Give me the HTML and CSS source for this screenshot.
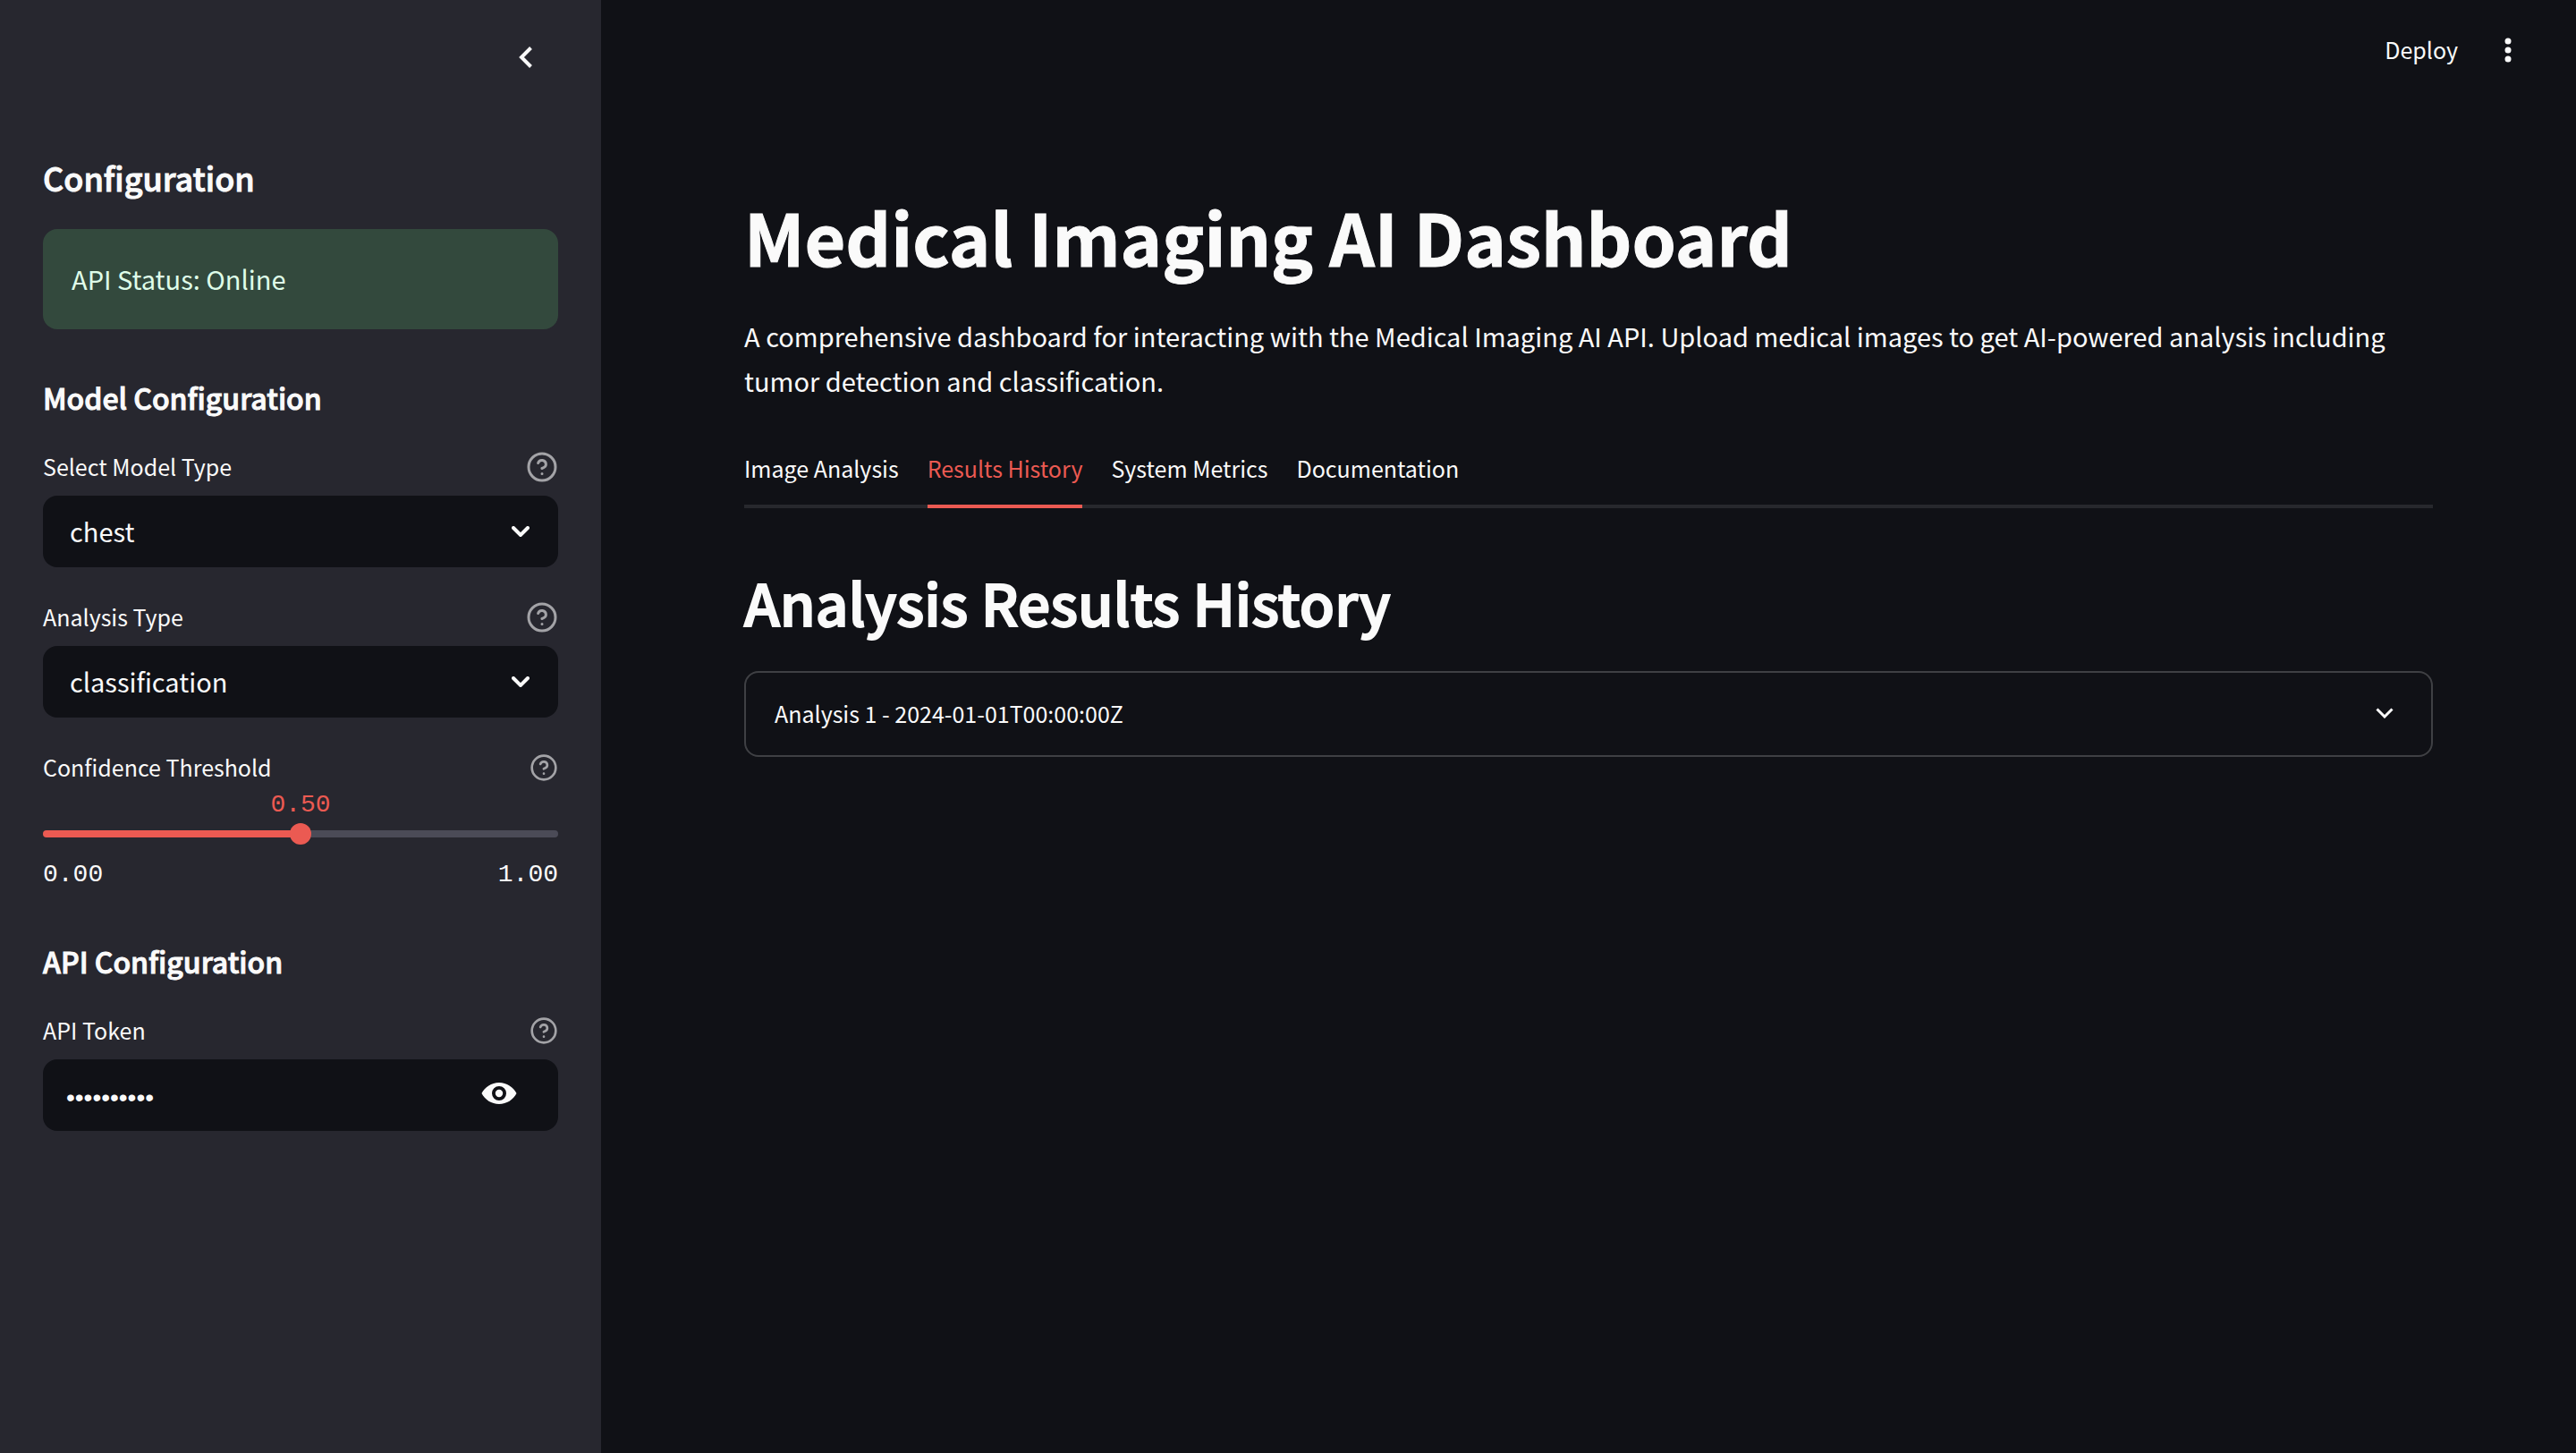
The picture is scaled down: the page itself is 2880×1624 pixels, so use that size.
FILE: index.html
```html
<!DOCTYPE html>
<html lang="en">
<head>
<meta charset="utf-8">
<meta name="viewport" content="width=device-width, initial-scale=1">
<title>Medical Imaging AI Dashboard</title>
<link rel="stylesheet" href="styles.css">
</head>
<body>
<svg class="sprite" aria-hidden="true">
  <symbol id="icon-help" viewBox="0 0 24 24"><g fill="none" stroke="currentColor" stroke-width="2" stroke-linecap="round" stroke-linejoin="round"><circle cx="12" cy="12" r="10"/><path d="M9.09 9a3 3 0 0 1 5.83 1c0 2-3 3-3 3M12 17h.01"/></g></symbol>
  <symbol id="icon-down" viewBox="0 0 20 12"><path d="M1.500 1.500l8.500 8.500 8.500-8.500" fill="none" stroke="currentColor" stroke-width="3"/></symbol>
  <symbol id="icon-down-round" viewBox="0 0 20 12"><path d="M2 2l8 8 8-8" fill="none" stroke="currentColor" stroke-width="4" stroke-linecap="round"/></symbol>
</svg>
<div class="app">
  <aside class="sidebar">
    <div class="sidebar-header">
      <button class="icon-button" type="button" aria-label="Collapse sidebar">
        <svg class="icon-collapse" viewBox="0 0 16 24"><path d="M13.5 1.5L3 12l10.500 10.500" fill="none" stroke="currentColor" stroke-width="4"/></svg>
      </button>
    </div>

    <h2 class="sidebar-title">Configuration</h2>
    <div class="status" role="status">API Status: Online</div>

    <section class="group">
      <h3 class="group-title">Model Configuration</h3>
      <div class="field">
        <div class="field-head">
          <label for="model">Select Model Type</label>
          <svg class="help"><use href="#icon-help"/></svg>
        </div>
        <div class="control">
          <select id="model" class="box"><option>chest</option></select>
          <svg class="chevron control-icon"><use href="#icon-down-round"/></svg>
        </div>
      </div>
      <div class="field">
        <div class="field-head">
          <label for="analysis">Analysis Type</label>
          <svg class="help"><use href="#icon-help"/></svg>
        </div>
        <div class="control">
          <select id="analysis" class="box"><option>classification</option></select>
          <svg class="chevron control-icon"><use href="#icon-down-round"/></svg>
        </div>
      </div>
      <div class="field">
        <div class="field-head">
          <label for="threshold">Confidence Threshold</label>
          <svg class="help help-small"><use href="#icon-help"/></svg>
        </div>
        <div class="slider">
          <output class="slider-value" for="threshold">0.50</output>
          <input id="threshold" type="range" min="0" max="1" step="0.01" value="0.5">
          <div class="slider-range"><span>0.00</span><span>1.00</span></div>
        </div>
      </div>
    </section>

    <section class="group">
      <h3 class="group-title">API Configuration</h3>
      <div class="field">
        <div class="field-head">
          <label for="token">API Token</label>
          <svg class="help help-small"><use href="#icon-help"/></svg>
        </div>
        <div class="control">
          <input id="token" class="box token" type="password" value="test_token">
          <button class="reveal" type="button" aria-label="Show password text">
            <svg class="icon-eye" viewBox="0 0 40 24"><path fill="currentColor" fill-rule="evenodd" d="M20 0C11.500 0 4 5 .5 12 4 19 11.500 24 20 24s16-5 19.500-12C36 5 28.500 0 20 0zm0 20a8 8 0 1 1 0-16 8 8 0 0 1 0 16zm0-12.200a4.200 4.200 0 1 0 0 8.400 4.200 4.200 0 0 0 0-8.400z"/></svg>
          </button>
        </div>
      </div>
    </section>
  </aside>

  <div class="page">
    <header class="toolbar">
      <button class="deploy" type="button">Deploy</button>
      <button class="icon-button" type="button" aria-label="Main menu">
        <svg class="icon-menu" viewBox="0 0 8 28" fill="currentColor"><circle cx="4" cy="4" r="3.500"/><circle cx="4" cy="14" r="3.500"/><circle cx="4" cy="24" r="3.500"/></svg>
      </button>
    </header>
    <main class="content">
      <h1>Medical Imaging AI Dashboard</h1>
      <p class="intro">A comprehensive dashboard for interacting with the Medical Imaging AI API. Upload medical images to get AI-powered analysis including tumor detection and classification.</p>
      <div class="tabs" role="tablist">
        <button class="tab" type="button" role="tab" aria-selected="false">Image Analysis</button>
        <button class="tab" type="button" role="tab" aria-selected="true">Results History</button>
        <button class="tab" type="button" role="tab" aria-selected="false">System Metrics</button>
        <button class="tab" type="button" role="tab" aria-selected="false">Documentation</button>
      </div>
      <h2>Analysis Results History</h2>
      <details class="expander">
        <summary>
          <span>Analysis 1 - 2024-01-01T00:00:00Z</span>
          <svg class="chevron"><use href="#icon-down"/></svg>
        </summary>
      </details>
    </main>
  </div>
</div>
</body>
</html>
```
FILE: styles.css
```css
:root {
  --bg: #101116;
  --panel: #27272f;
  --text: #fafafa;
  --accent: #eb5a52;
  --muted: #a3a3a7;
  --mono: "Liberation Mono", monospace;
}

*, *::before, *::after { box-sizing: border-box; }

body {
  margin: 0;
  background: var(--bg);
  color: var(--text);
  font: 400 29px/50px "Noto Sans CJK SC", "Noto Sans", sans-serif;
}

h1, h2, h3, p { margin: 0; }

/* Thickens the medium weight to a semibold */
h1, h2, h3 { -webkit-text-stroke: 1px currentColor; }

button {
  padding: 0;
  border: 0;
  background: none;
  color: inherit;
  font: inherit;
  cursor: pointer;
}

svg { display: block; flex: none; }
.sprite { position: absolute; width: 0; height: 0; }

.app { display: flex; min-height: 100vh; }

/* Sidebar */
.sidebar {
  flex: 0 0 672px;
  padding: 40px 48px 48px;
  background: var(--panel);
}

.icon-button {
  display: grid;
  place-items: center;
  width: 48px;
  height: 48px;
}

.sidebar-header {
  display: flex;
  justify-content: flex-end;
  margin-bottom: 86px;
  padding-right: 12px;
}
.icon-collapse { width: 16px; height: 24px; }

.sidebar-title {
  margin-bottom: 34px;
  font-size: 36px;
  line-height: 48px;
  font-weight: 500;
}

.status {
  padding: 31px 32px 33px;
  border-radius: 16px;
  background: #33493d;
  color: #dffde9;
  line-height: 48px;
}

.group {
  display: flex;
  flex-direction: column;
  gap: 34px;
  margin-top: 54px;
}
.group + .group { margin-top: 58px; }

.group-title {
  font-size: 32px;
  line-height: 44px;
  font-weight: 500;
}

.field-head {
  display: flex;
  align-items: center;
  justify-content: space-between;
  font-size: 25px;
  line-height: 42px;
}

.help { width: 36px; height: 36px; margin-top: 2px; color: var(--muted); }
.help-small { width: 32px; height: 32px; }

.control {
  display: grid;
  align-items: center;
  margin-top: 12px;
}
.control > * { grid-area: 1 / 1; }

.box {
  width: 100%;
  height: 80px;
  padding: 0 88px 2px 30px;
  border: 0;
  border-radius: 16px;
  background: var(--bg);
  color: inherit;
  font: inherit;
  appearance: none;
}
.token { padding: 6px 88px 0 26px; font: 400 28px/32px "Liberation Sans", sans-serif; }

.chevron { width: 20px; height: 12px; }
.control-icon { justify-self: end; margin-right: 32px; pointer-events: none; }

.reveal { justify-self: end; margin-right: 46px; padding-bottom: 4px; }
.icon-eye { width: 40px; height: 24px; }

.slider {
  padding-top: 6px;
  font: 400 28px/32px var(--mono);
}
.slider-value { display: block; text-align: center; color: var(--accent); }
.slider input {
  display: block;
  width: 100%;
  height: 24px;
  margin: 4px 0 18px;
  appearance: none;
  background: none;
}
.slider input::-webkit-slider-runnable-track {
  height: 8px;
  border-radius: 4px;
  background: linear-gradient(to right, var(--accent) 50%, #4b4b57 50%);
}
.slider input::-webkit-slider-thumb {
  appearance: none;
  width: 24px;
  height: 24px;
  margin-top: -8px;
  border-radius: 50%;
  background: var(--accent);
}
.slider-range { display: flex; justify-content: space-between; }

/* Main page */
.page { flex: 1; min-width: 0; }

.toolbar {
  display: flex;
  align-items: center;
  justify-content: flex-end;
  gap: 32px;
  height: 112px;
  padding-right: 52px;
}
.deploy { padding-bottom: 2px; font-size: 25px; line-height: 40px; }
.icon-menu { width: 8px; height: 28px; }

.content { padding: 104px 160px 160px; }

h1 {
  margin-bottom: 38px;
  font-size: 79px;
  line-height: 96px;
  font-weight: 700;
}

.tabs {
  display: flex;
  gap: 32px;
  margin: 52px 0 64px;
  box-shadow: inset 0 -4px #27282d;
}
.tab {
  padding-bottom: 20px;
  border-bottom: 4px solid transparent;
  font-size: 25px;
  line-height: 42px;
}
.tab[aria-selected="true"] { border-color: var(--accent); color: var(--accent); }

.content h2 {
  margin-bottom: 38px;
  font-size: 64px;
  line-height: 80px;
  font-weight: 500;
  -webkit-text-stroke-width: 2px;
}

.expander { border: 2px solid #3f4044; border-radius: 16px; }
.expander summary {
  display: flex;
  align-items: center;
  justify-content: space-between;
  padding: 24px 42px 26px 32px;
  font-size: 25px;
  line-height: 42px;
  list-style: none;
  cursor: pointer;
}
```
